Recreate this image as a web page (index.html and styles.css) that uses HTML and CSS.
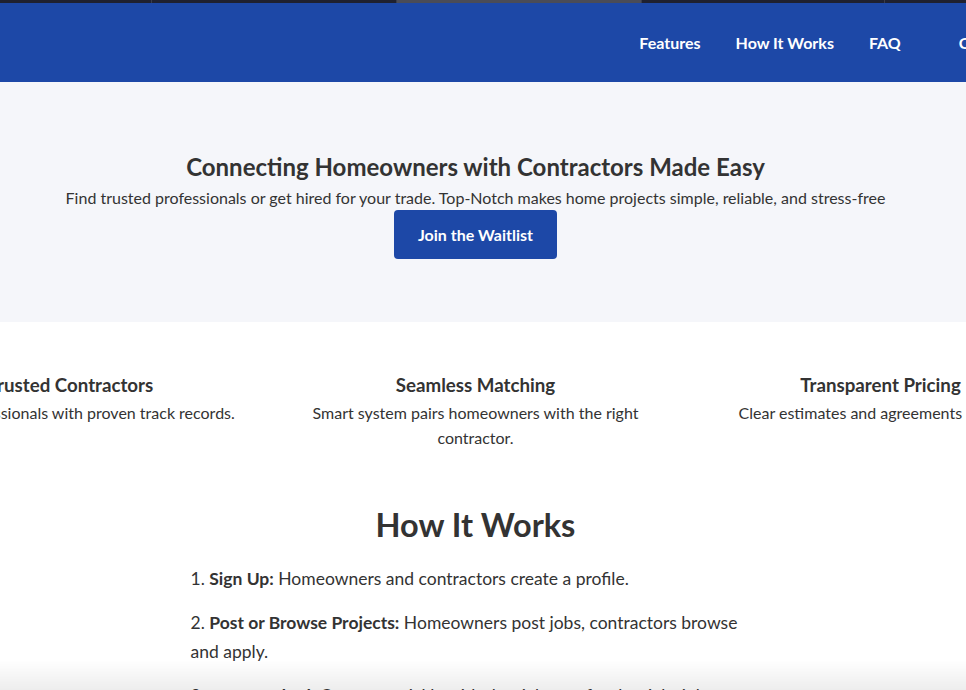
FILE: index.html
```html
<!DOCTYPE html>
<html lang="en">
<head>
<meta charset="utf-8">
<title>Top-Notch</title>
<link rel="stylesheet" href="styles.css">
</head>
<body>
<div class="tabstrip">
  <span class="tab tab-a"></span>
  <span class="tab tab-b"></span>
  <span class="tab tab-active"></span>
  <span class="tab tab-c"></span>
  <span class="tab tab-d"></span>
</div>
<header class="site-header">
  <nav class="nav">
    <a href="#features">Features</a>
    <a href="#how">How It Works</a>
    <a href="#faq">FAQ</a>
    <a href="#contact" class="nav-cta">Contact</a>
  </nav>
</header>
<section class="hero">
  <div class="inner">
    <h1>Connecting Homeowners with Contractors Made Easy</h1>
    <p class="lead">Find trusted professionals or get hired for your trade. Top-Notch makes home projects simple, reliable, and stress-free</p>
    <a class="btn" href="#join">Join the Waitlist</a>
  </div>
</section>
<section class="features" id="features">
  <div class="inner feature-row">
    <div class="feature">
      <h3>Trusted Contractors</h3>
      <p>Vetted professionals with proven track records.</p>
    </div>
    <div class="feature">
      <h3>Seamless Matching</h3>
      <p>Smart system pairs homeowners with the right contractor.</p>
    </div>
    <div class="feature">
      <h3>Transparent Pricing</h3>
      <p>Clear estimates and agreements upfront.</p>
    </div>
  </div>
</section>
<section class="how" id="how">
  <div class="inner">
    <h2>How It Works</h2>
    <div class="steps">
      <p>1. <strong>Sign Up:</strong> Homeowners and contractors create a profile.</p>
      <p>2. <strong>Post or Browse Projects:</strong> Homeowners post jobs, contractors browse and apply.</p>
      <p>3. <strong>Get Matched:</strong> Connect quickly with the right pro for the right job.</p>
    </div>
  </div>
</section>
<div class="bottom-fade"></div>
</body>
</html>
```
FILE: styles.css
```css
* { box-sizing: border-box; }
html, body { margin: 0; padding: 0; }
body {
  font-family: Lato, "Open Sans", "Liberation Sans", sans-serif;
  color: #333;
  background: #fff;
  overflow-x: hidden;
}
.tabstrip {
  display: flex;
  height: 3px;
  background: #1f2130;
}
.tab { height: 3px; border-right: 1px solid #3a3c4a; }
.tab-a { width: 152px; }
.tab-b { width: 245px; }
.tab-active { width: 245px; background: #4a4c58; }
.tab-c { width: 243px; }
.tab-d { flex: 1; border-right: 0; }

.site-header {
  background: #1d48a7;
  height: 79px;
  display: flex;
  align-items: center;
  justify-content: flex-end;
  overflow: hidden;
}
.nav {
  display: flex;
  align-items: center;
  gap: 35px;
  margin-right: -49px;
  flex-shrink: 0;
}
.nav a {
  color: #fff;
  text-decoration: none;
  font-weight: 700;
  font-size: 16px;
  white-space: nowrap;
}
.nav .nav-cta { margin-left: 23px; }

.inner { margin-right: 15px; }

.hero {
  background: #f5f6fa;
  padding: 70px 0 63px;
  text-align: center;
}
.hero h1 {
  margin: 0 0 5px;
  font-size: 24px;
  line-height: 29px;
  font-weight: 700;
}
.lead {
  margin: 0;
  font-size: 16px;
  line-height: 24px;
}
.btn {
  display: inline-block;
  background: #1d48a7;
  color: #fff;
  text-decoration: none;
  font-weight: 700;
  font-size: 16px;
  line-height: 49px;
  padding: 0 24px;
  border-radius: 4px;
}

.features {
  padding: 51px 0 28px;
}
.feature-row {
  display: flex;
  justify-content: center;
  gap: 55px;
}
.feature {
  width: 350px;
  flex-shrink: 0;
  text-align: center;
}
.feature h3 {
  margin: 0 0 3px;
  font-size: 18.72px;
  line-height: 24px;
  font-weight: 700;
}
.feature p {
  margin: 0;
  font-size: 16px;
  line-height: 25px;
}

.how {
  padding: 28px 0 40px;
}
.how h2 {
  margin: 0 0 20px;
  text-align: center;
  font-size: 32.5px;
  line-height: 38px;
  font-weight: 700;
}
.steps {
  max-width: 570px;
  margin: 0 auto;
}
.steps p {
  margin: 0 0 15px;
  font-size: 17.5px;
  line-height: 29px;
}

.bottom-fade {
  position: fixed;
  left: 0;
  right: 0;
  bottom: 0;
  height: 30px;
  background: linear-gradient(to bottom, rgba(0,0,0,0), rgba(0,0,0,0.07));
  pointer-events: none;
}
```
